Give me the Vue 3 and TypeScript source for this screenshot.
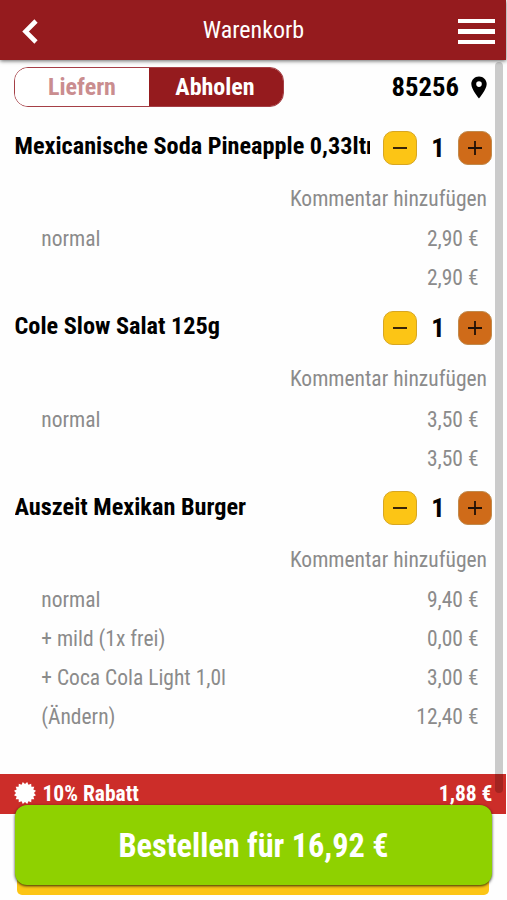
<script setup lang="ts">
import { ref } from 'vue'

interface Line { label: string; price: string }
interface CartItem { name: string; quantity: number; lines: Line[] }

const items = ref<CartItem[]>([
  { name: 'Mexicanische Soda Pineapple 0,33ltr', quantity: 1, lines: [
    { label: 'normal', price: '2,90 €' }, { label: '', price: '2,90 €' }] },
  { name: 'Cole Slow Salat 125g', quantity: 1, lines: [
    { label: 'normal', price: '3,50 €' }, { label: '', price: '3,50 €' }] },
  { name: 'Auszeit Mexikan Burger', quantity: 1, lines: [
    { label: 'normal', price: '9,40 €' }, { label: '+ mild (1x frei)', price: '0,00 €' },
    { label: '+ Coca Cola Light 1,0l', price: '3,00 €' }, { label: '(Ändern)', price: '12,40 €' }] },
])

const sealPoints = Array.from({ length: 32 }, (_, i) => {
  const radius = i % 2 === 0 ? 11.2 : 9
  const angle = ((i + 1) * Math.PI) / 16
  return `${(11 + radius * Math.sin(angle)).toFixed(2)},${(11 - radius * Math.cos(angle)).toFixed(2)}`
}).join(' ')
</script>

<template>
  <div class="page">
    <header class="bar">
      <svg class="back" width="18" height="26" viewBox="0 0 18 26"><path d="M15 2 4.500 12.500 15 23" /></svg>
      <h1>Warenkorb</h1>
      <div class="burger"><i></i><i></i><i></i></div>
    </header>
    <section class="mode">
      <div class="toggle"><button>Liefern</button><button class="active">Abholen</button></div>
      <div class="zip">
        <span>85256</span>
        <svg width="16" height="23" viewBox="0 0 16 23"><path fill-rule="evenodd" d="M8 .4C3.7.4.3 3.8.3 8c0 5.5 7.7 14.5 7.7 14.5S15.700 13.500 15.700 8C15.700 3.800 12.300.4 8 .4Zm0 4.900a2.800 2.800 0 1 1 0 5.600 2.800 2.800 0 0 1 0-5.600Z" /></svg>
      </div>
    </section>
    <main>
      <article v-for="item in items" :key="item.name">
        <div class="head">
          <h2>{{ item.name }}</h2>
          <button class="step minus"><svg viewBox="0 0 16 16"><path d="M1 8H15" /></svg></button>
          <span class="qty">{{ item.quantity }}</span>
          <button class="step plus"><svg viewBox="0 0 16 16"><path d="M1 8H15M8 1V15" /></svg></button>
        </div>
        <div class="comment">Kommentar hinzufügen</div>
        <div v-for="(line, i) in item.lines" :key="i" class="line">
          <span>{{ line.label }}</span><span>{{ line.price }}</span>
        </div>
      </article>
    </main>
    <footer>
      <div class="discount">
        <svg width="22" height="22" viewBox="0 0 22 22"><polygon :points="sealPoints" /></svg>
        <span>10% Rabatt</span><span class="amount">1,88 €</span>
      </div>
      <button class="order">Bestellen für 16,92 €</button>
      <div class="under"></div>
    </footer>
    <div class="scrollbar"></div>
  </div>
</template>

<style>
body { background: #fff; }
</style>
<style scoped>
.page { position: relative; box-sizing: border-box; width: 507px; height: 900px; overflow: hidden; background: #fefefe; font-family: "Roboto Condensed", Roboto, sans-serif; font-stretch: 75%; color: #000; display: flex; flex-direction: column; padding-right: 1px; }
button { font: inherit; font-stretch: 75%; border: 0; padding: 0; margin: 0; }
h1, h2 { margin: 0; }
.bar { flex: none; height: 60px; background: #951b1e; box-shadow: 0 1px 4px rgba(0, 0, 0, .6); display: grid; grid-template-columns: 60px 1fr 60px; align-items: center; z-index: 1; }
.back { margin: 3px 0 0 21px; fill: none; stroke: #fff; stroke-width: 4.6; }
h1 { color: #fff; font-size: 24px; font-weight: 400; text-align: center; padding-left: 1px; }
.burger { display: flex; flex-direction: column; gap: 6px; width: 37px; margin: 3px 0 0 12px; }
.burger i { height: 4.3px; background: #fff; }
.mode { flex: none; height: 57px; display: flex; justify-content: space-between; align-items: flex-start; padding: 7px 19px 0 14px; box-sizing: border-box; }
.toggle { width: 270px; height: 40px; box-sizing: border-box; border: 1px solid #a53f46; border-radius: 14px; overflow: hidden; display: grid; grid-template-columns: 1fr 1fr; }
.toggle button { background: #fff; color: #ca8d8f; font-size: 24px; font-weight: 700; }
.toggle .active { background: #951b1e; color: #fff; padding-right: 2px; }
.zip { display: flex; align-items: center; gap: 12px; height: 40px; font-size: 26.7px; font-weight: 700; }
main { flex: none; height: 657px; }
.head { height: 61px; display: flex; align-items: center; padding: 0 14px 0 14.5px; box-sizing: border-box; }
h2 { width: 355.5px; margin-right: 13px; overflow: hidden; white-space: nowrap; font-size: 24.25px; font-weight: 700; line-height: 30px; padding-bottom: 3px; }
.step { width: 34px; height: 34px; flex: none; box-sizing: border-box; border-radius: 10px; display: grid; place-items: center; }
.step svg { width: 16px; height: 16px; fill: none; stroke: #211006; stroke-width: 1.8; }
.minus { background: #fcc515; border: 1px solid #d7a622; }
.plus { background: #cf6b19; border: 1px solid #c18a4c; }
.qty { width: 41px; text-align: center; font-size: 26.7px; font-weight: 700; padding-left: 1px; box-sizing: border-box; }
.comment { height: 41.4px; line-height: 42px; text-align: right; padding-right: 19px; color: #8b8b8b; font-size: 21.5px; }
.line { height: 39px; line-height: 40.6px; display: flex; justify-content: space-between; padding: 0 27.5px 0 41.3px; color: #8b8b8b; font-size: 21.5px; }
.discount { height: 40px; background: #cc2d29; color: #fff; display: flex; align-items: center; gap: 6.5px; padding: 0 13.5px 0 14px; font-size: 21.5px; font-weight: 700; }
.discount span { padding-bottom: 1px; }
.discount svg { fill: #fff; margin-top: -2px; overflow: visible; }
.amount { margin-left: auto; }
.order { display: block; position: relative; z-index: 1; width: 477px; height: 80px; margin: -9px 0 0 15px; padding-top: 1px; border-radius: 12px; background: #8fd100; color: #fff; font-size: 32.3px; font-weight: 700; box-shadow: 0 1px 3px rgba(0, 0, 0, .8); }
.under { width: 472px; height: 17.5px; margin: -8px 0 0 17px; background: #fcc515; border-radius: 0 0 5px 5px; }
.scrollbar { position: absolute; z-index: 2; left: 495px; top: 62px; width: 8px; height: 731px; border-radius: 4px; background: rgba(0, 0, 0, .2); }
</style>
